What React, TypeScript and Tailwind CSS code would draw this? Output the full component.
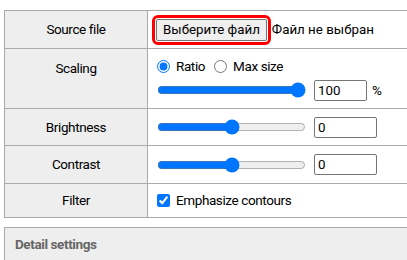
import React from 'react'

const labelCell =
  'border border-[#aaaaaa] bg-[#eeeeee] w-[143px] text-center align-middle font-normal'
const valueCell = 'border border-[#aaaaaa] bg-white pl-[9px] align-middle'

function NumberBox({ value, width }: { value: string; width: string }) {
  return (
    <input
      type="text"
      defaultValue={value}
      className={`${width} h-[21px] border border-[#767676] bg-white px-[3px] text-[13.33px] tracking-normal rounded-[2px]`}
    />
  )
}

export default function App() {
  return (
    <div
      className="w-[407px] h-[260px] overflow-hidden bg-white text-black text-[13.5px] tracking-[-0.4px]"
      style={{ fontFamily: 'Roboto, "Noto Sans", sans-serif' }}
    >
      <div className="pt-[10px] pl-[4px] w-[440px]">
        <table className="w-full border-collapse">
          <tbody>
            <tr className="h-[38px]">
              <th className={labelCell}>Source file</th>
              <td className="border border-[#aaaaaa] bg-white pl-[8px] align-middle">
                <div className="flex items-center text-[13.33px] tracking-normal">
                  <button className="h-[22px] px-[6px] border border-[#767676] bg-[#efefef] rounded-[2px] outline-[3px] outline-solid outline-[#ff0000] outline-offset-[1px]">
                    Выберите файл
                  </button>
                  <span className="ml-[5px]">Файл не выбран</span>
                </div>
              </td>
            </tr>
            <tr className="h-[60px]">
              <th className="border border-[#aaaaaa] bg-[#eeeeee] w-[143px] text-center align-top font-normal pt-[9px]">
                Scaling
              </th>
              <td className={valueCell}>
                <div className="flex flex-col gap-[3px]">
                  <div className="flex items-center">
                    <input type="radio" name="scale" defaultChecked className="w-[13px] h-[13px]" />
                    <span className="ml-[6px]">Ratio</span>
                    <input type="radio" name="scale" className="ml-[9px] w-[13px] h-[13px]" />
                    <span className="ml-[6px]">Max size</span>
                  </div>
                  <div className="flex items-center">
                    <input type="range" defaultValue={100} className="w-[149px]" />
                    <span className="ml-[8px] flex items-center">
                      <NumberBox value="100" width="w-[53px]" />
                    </span>
                    <span className="ml-[5px]">%</span>
                  </div>
                </div>
              </td>
            </tr>
            <tr className="h-[37px]">
              <th className={labelCell}>Brightness</th>
              <td className={valueCell}>
                <div className="flex items-center">
                  <input type="range" defaultValue={50} className="w-[149px]" />
                  <span className="ml-[8px] flex items-center">
                    <NumberBox value="0" width="w-[63px]" />
                  </span>
                </div>
              </td>
            </tr>
            <tr className="h-[38px]">
              <th className={labelCell}>Contrast</th>
              <td className={valueCell}>
                <div className="flex items-center">
                  <input type="range" defaultValue={50} className="w-[149px]" />
                  <span className="ml-[8px] flex items-center">
                    <NumberBox value="0" width="w-[63px]" />
                  </span>
                </div>
              </td>
            </tr>
            <tr className="h-[34px]">
              <th className={labelCell}>Filter</th>
              <td className={valueCell}>
                <label className="flex items-center">
                  <input type="checkbox" defaultChecked className="w-[13px] h-[13px]" />
                  <span className="ml-[6px]">Emphasize contours</span>
                </label>
              </td>
            </tr>
          </tbody>
        </table>
        <div className="mt-[9px] h-[60px] border border-[#aaaaaa] bg-[#eeeeee] px-[10px] pt-[6px]">
          <span className="font-bold text-[#666666]">Detail settings</span>
        </div>
      </div>
    </div>
  )
}
